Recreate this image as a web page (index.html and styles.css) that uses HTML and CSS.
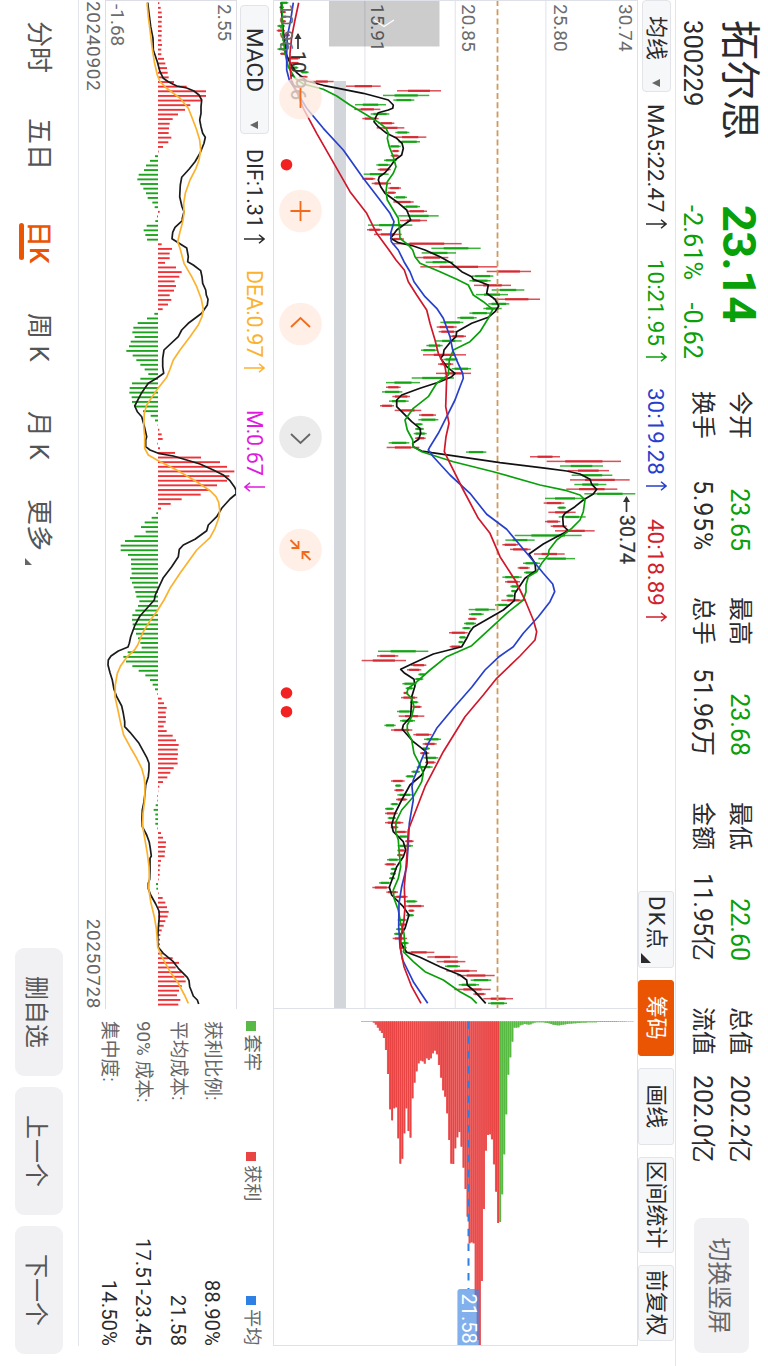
FILE: index.html
```html
<!DOCTYPE html>
<html lang="zh-CN">
<head>
  <meta charset="UTF-8"/>
  <meta name="viewport" content="width=device-width,initial-scale=1"/>
  <title>拓尔思 300229</title>
  <link rel="stylesheet" href="styles.css">
</head>
<body>
  <div class="phone">
  <div class="screen">
    <header class="head">
      <div class="name">
        <h1>拓尔思</h1>
        <span>300229</span>
      </div>
      <div class="price">
        <strong>23.14</strong>
        <div><span>-2.61%</span><span>-0.62</span></div>
      </div>
      <div class="stats">
        <span>今开</span><b class="down">23.65</b>
        <span>最高</span><b class="down">23.68</b>
        <span>最低</span><b class="down">22.60</b>
        <span>总值</span><b>202.2亿</b>
        <span>换手</span><b class="pct">5.95%</b>
        <span>总手</span><b>51.96万</b>
        <span>金额</span><b>11.95亿</b>
        <span>流值</span><b>202.0亿</b>
      </div>
      <button class="switch">切换竖屏</button>
    </header>

    <div class="mabar">
      <button class="pick">均线<i class="caret"></i></button>
      <div class="ma">
        <span>MA5:22.47<svg class="arr" viewBox="0 0 10 21"><path d="M5 21V1M.7 6L5 1l4.300 5"/></svg></span>
        <span class="ma10">10:21.95<svg class="arr" viewBox="0 0 10 21"><path d="M5 21V1M.7 6L5 1l4.300 5"/></svg></span>
        <span class="ma30">30:19.28<svg class="arr" viewBox="0 0 10 21"><path d="M5 21V1M.7 6L5 1l4.300 5"/></svg></span>
        <span class="ma40">40:18.89<svg class="arr" viewBox="0 0 10 21"><path d="M5 21V1M.7 6L5 1l4.300 5"/></svg></span>
      </div>
      <div class="tools">
        <button class="dk">DK点<i class="corner"></i></button>
        <button class="on">筹码</button>
        <button>画线</button>
        <button class="wide">区间统计</button>
        <button>前复权</button>
      </div>
    </div>

    <main class="main">
      <svg id="kline" width="1009" height="365"></svg>
      <svg id="chips" width="337" height="365"></svg>
    </main>

    <section class="lower">
      <div class="macd">
        <div class="macdbar">
          <button class="pick">MACD<i class="caret"></i></button>
          <span class="dif">DIF:1.31<svg class="arr" viewBox="0 0 10 21"><path d="M5 21V1M.7 6L5 1l4.300 5"/></svg></span>
          <span class="dea">DEA:0.97<svg class="arr" viewBox="0 0 10 21"><path d="M5 21V1M.7 6L5 1l4.300 5"/></svg></span>
          <span class="m">M:0.67<svg class="arr" viewBox="0 0 10 21"><path d="M5 0V20M.7 15L5 20l4.300-5"/></svg></span>
        </div>
        <svg id="macd" width="1009" height="132"></svg>
        <div class="dates"><span>20240902</span><span>20250728</span></div>
      </div>
      <div class="info">
        <div class="legend">
          <span><i class="g"></i>套牢</span>
          <span><i class="r"></i>获利</span>
          <span><i class="b"></i>平均</span>
        </div>
        <dl>
          <dt>获利比例:</dt><dd>88.90%</dd>
          <dt>平均成本:</dt><dd>21.58</dd>
          <dt>90% 成本:</dt><dd>17.51-23.45</dd>
          <dt>集中度:</dt><dd>14.50%</dd>
        </dl>
      </div>
    </section>

    <footer class="foot">
      <nav>
        <a>分时</a><a>五日</a><a class="on">日K</a><a>周 K</a><a>月 K</a><a>更多<i class="corner"></i></a>
      </nav>
      <div class="btns">
        <button>删自选</button>
        <button>上一个</button>
        <button>下一个</button>
      </div>
    </footer>
  </div>
  </div>
  <script src="chart.js"></script>
</body>
</html>
```
FILE: styles.css
```css
:root {
  --text: #2b2b2d;
  --muted: #666;
  --line: #e2e4e9;
  --soft: #f1f1f4;
  --green: #0aa00a;
  --red: #d0202c;
  --blue: #2740cc;
  --accent: #ea5504;
}
* { box-sizing: border-box; margin: 0; padding: 0 }
html { overflow: hidden }
body {
  background: #fff;
  font-family: Roboto, "Noto Sans CJK SC", sans-serif;
  color: var(--text);
}
button {
  font: inherit;
  color: inherit;
  border: none;
  white-space: nowrap;
}
svg { display: block }

.phone {
  width: 768px;
  height: 1366px;
  overflow: hidden;
}
/* landscape page turned clockwise */
.screen {
  width: 1366px;
  height: 768px;
  display: flex;
  flex-direction: column;
  transform-origin: 0 0;
  transform: translateX(768px) rotate(90deg);
}

/* header */
.head {
  height: 93px;
  display: flex;
  border-bottom: 1px solid var(--line);
}
.name { width: 205px; padding-left: 20px }
.name h1 {
  font-size: 40px;
  line-height: 58px;
  font-weight: 400;
}
.name span {
  display: block;
  font-size: 25.6px;
  line-height: 34px;
}
.price { width: 186px; color: var(--green) }
.price strong {
  display: block;
  font-size: 47px;
  line-height: 58px;
  letter-spacing: -0.8px;
}
.price div {
  display: flex;
  justify-content: space-between;
  width: 154px;
  font-size: 25.4px;
  line-height: 34px;
}
.stats {
  width: 827px;
  display: grid;
  grid-template-columns: 50px 156px 50px 155px 50px 155px 50px 110px;
  grid-template-rows: 37px 37px;
  padding-top: 10px;
  line-height: 37px;
}
.stats span { font-size: 24px }
.stats b {
  font-size: 25px;
  font-weight: 400;
  text-align: right;
  padding-right: 46px;
}
.stats b:nth-of-type(4n) {
  text-align: left;
  padding: 0 0 0 18px;
}
.stats .pct { letter-spacing: 0.8px }
.stats .down { color: var(--green) }
.switch {
  width: 135px;
  height: 55px;
  margin-top: 19px;
  border-radius: 8px;
  background: var(--soft);
  color: var(--muted);
  font-size: 24px;
}

/* moving averages */
.mabar {
  height: 37px;
  display: flex;
  align-items: center;
  font-size: 22.4px;
}
.pick {
  position: relative;
  height: 29px;
  background: #f6f7f9;
  border: 1px solid var(--line);
  border-radius: 4px;
  text-align: left;
  line-height: 27px;
}
.mabar .pick { width: 92px; padding-left: 15px; font-size: 22px }
.caret {
  position: absolute;
  right: 4px;
  top: 10px;
  border: 4.500px solid transparent;
  border-top: 8px solid var(--muted);
  border-bottom: none;
}
.ma {
  display: grid;
  grid-template-columns: 155px 129px 131px 372px;
  padding-left: 12px;
}
.ma span, .macdbar span { display: flex; align-items: center }
.ma10 { color: var(--green) }
.ma30 { color: var(--blue) }
.ma40 { color: var(--red) }
.arr {
  width: 10px;
  height: 21px;
  margin-left: 6px;
  fill: none;
  stroke: currentColor;
  stroke-width: 1.5;
}
.tools { display: flex; gap: 12px }
.tools button {
  position: relative;
  width: 76.500px;
  height: 36px;
  background: #f6f7f9;
  border: 1px solid var(--line);
  border-radius: 3px;
  font-size: 22px;
  line-height: 33px;
}
.tools .wide { width: 96px }
.tools .on {
  background: var(--accent);
  border-color: var(--accent);
  color: #fff;
}
.tools .dk {
  text-align: left;
  padding-left: 4px;
  letter-spacing: 1.2px;
}
.corner {
  position: absolute;
  right: 4px;
  bottom: 2px;
  border-left: 10px solid transparent;
  border-bottom: 10px solid var(--text);
}

.main {
  height: 365px;
  display: flex;
}
.lower {
  height: 195px;
  width: 1346px;
  display: flex;
  border-bottom: 1px solid var(--line);
}
.macd { width: 1009px }
.macdbar {
  height: 36px;
  display: flex;
  align-items: center;
  padding-left: 5px;
  font-size: 21.5px;
}
.macdbar .pick { width: 129px; padding-left: 22px; font-size: 22.600px }
.macdbar .arr { margin-left: 6px }
.dif { width: 121px; margin-left: 15px }
.dea { width: 140px; color: #fbb32f }
.m { color: #e01be0 }
.dates {
  display: flex;
  justify-content: space-between;
  padding: 0 0 0 1px;
  font-size: 19px;
  letter-spacing: 0.6px;
  line-height: 24px;
  color: var(--muted);
}

/* chips summary */
.info {
  width: 337px;
  padding-left: 12px;
  font-size: 18.800px;
  color: var(--muted);
}
.legend {
  display: grid;
  grid-template-columns: 130.500px 144px auto;
  height: 37px;
  align-items: center;
  font-size: 18.300px;
}
.legend i {
  display: inline-block;
  width: 9.500px;
  height: 9.500px;
  margin-right: 4px;
}
.legend .g { background: #58b947 }
.legend .r { background: #e94545 }
.legend .b { background: #2f80e4 }
.info dl {
  display: grid;
  grid-template-columns: auto 1fr;
  line-height: 34.300px;
  padding-top: 7px;
}
.info dd {
  text-align: right;
  color: var(--text);
  font-size: 20.400px;
}

/* footer */
.foot {
  flex: 1;
  display: flex;
  align-items: center;
  justify-content: space-between;
  padding: 0 12px 0 21px;
}
nav { display: flex; color: #555 }
nav a {
  position: relative;
  width: 97px;
  font-size: 26px;
  line-height: 42px;
}
nav a:nth-child(2) { width: 103px }
nav a:nth-child(3) { width: 92px }
nav a:nth-child(4) { width: 98px }
nav a:nth-child(5) { width: 88px }
nav a:nth-child(6) { width: 70px }
nav .corner {
  right: 4px;
  bottom: 7px;
  border-left-width: 7px;
  border-bottom: 7px solid #666;
}
nav .on { color: var(--accent); font-weight: 500 }
nav .on::after {
  content: "";
  position: absolute;
  left: 2px;
  bottom: 1px;
  width: 37px;
  height: 5px;
  border-radius: 3px;
  background: var(--accent);
}
.btns { display: flex; gap: 11px }
.btns button {
  width: 128px;
  height: 48px;
  border-radius: 9px;
  background: var(--soft);
  color: #555;
  font-size: 24px;
}

/* svg parts */
.axis { font-size: 19px; fill: #6c6c6e }
.mark { font-size: 19.500px; fill: #333; stroke: #333; stroke-width: 0.3 }
.tag { font-size: 20px; fill: #fff }
```
FILE: chart.js
```js
const RED = '#d2232c', GREEN = '#0aa00a';
const $ = id => document.getElementById(id);

const line = (pts, color, y) => {
  const p = pts.trim().split(/\s+/).map(s => s.split(','));
  return `<polyline points="${p.map(([v, t]) => (t / 3).toFixed(1) + ',' + y(+v).toFixed(1)).join(' ')}"
    fill="none" stroke="${color}" stroke-width="1.7" stroke-linejoin="round"/>`;
};
const rect = (x, y, w, h, c, extra = '') =>
  `<rect x="${x.toFixed(2)}" y="${y.toFixed(2)}" width="${w.toFixed(2)}" height="${h.toFixed(2)}" fill="${c}" ${extra}/>`;

// ---- k line: colour low high
const candles = `g30 55,g28 42,r30 48,g34 50,r33 48,g22 45,r20 45,r35 60,g36 50,g30 46,g22 50,r30 50,r52 90,r60 88,g60 85,g92 116,
r88 113,r120 191,r228 332,r381 513,g339 478,g370 433,g255 348,r253 331,g302 358,r277 326,r325 373,r320 403,g376 418,r372 469,
g385 450,g357 392,r365 388,r362 387,g342 380,g319 360,r323 362,g281 356,r277 316,r305 363,r355 393,r350 378,g372 411,r370 431,
g400 450,r410 471,g385 506,r390 471,g294 427,r291 336,r312 395,r365 402,r366 575,g484 632,g455 558,r435 535,g467 550,r451 682,
r650 783,g606 670,g598 662,r612 723,g665 763,g618 714,r670 810,g655 718,g640 695,g598 660,g562 620,g511 580,r500 560,r506 560,
r540 588,g497 575,g469 518,g453 502,r459 588,g520 563,r504 550,g545 603,r498 603,g425 552,g348 450,r348 392,g336 397,r367 420,
g357 416,r330 372,r374 454,r447 498,g445 505,g435 458,g435 462,g431 470,r435 467,g356 418,r350 448,g588 649,r780 870,r830 1053,
g870 999,r893 1017,g905 1027,r900 1079,g913 1009,r889 1042,g943 1096,g825 945,r821 883,g862 888,r835 917,g866 947,r825 871,
r842 890,r855 974,g734 935,g706 794,r697 745,r720 782,r792 884,g805 915,g759 810,r743 779,g762 795,g697 755,r705 750,g721 748,
g723 740,g709 732,r694 767,g675 718,g596 676,g597 641,r594 620,g582 618,g577 602,r537 593,g567 588,g565 580,r539 575,g324 475,
r321 385,r275 408,r423 469,r411 454,g445 468,g435 460,g397 440,g407 430,r400 415,r393 442,g420 445,r425 455,g381 425,r386 463,
g390 435,g343 377,r363 427,r430 485,g462 513,r458 500,g455 480,r450 478,g460 505,r465 497,g440 488,g424 450,g407 433,r363 404,
g375 394,r373 402,g382 427,r378 412,g362 385,g345 372,r345 383,g353 378,r345 400,r362 385,r375 412,g385 415,r405 431,g383 429,
r382 405,r381 400,g351 388,r344 378,g362 380,g360 378,g357 375,g327 362,r307 358,r349 384,r373 413,g405 442,r407 462,r415 433,
g408 432,g383 410,r385 408,g378 404,g372 398,r368 411,g392 416,r388 410,r400 493,r472 563,r500 586,g525 570,r529 621,r562 674,
g602 664,g566 627,r553 662,r610 647,r640 729,g654 711`.split(',').map(s => s.trim());

const ma5 = `34,8 36,60 42,110 48,160 60,190 80,218 110,243 160,256 220,268 280,280 325,292 355,300 370,315 368,325 355,330 325,338
318,350 312,365 325,380 350,400 380,415 396,430 400,445 395,465 375,480 360,500 345,518 328,530 325,540 332,560 345,580 380,605
410,630 422,660 405,672 380,690 362,715 385,728 430,738 465,750 510,770 545,790 575,815 605,830 610,838 655,855 650,880 675,898
686,918 675,935 655,952 605,970 560,995 558,1010 542,1025 522,1050 520,1065 512,1075 530,1100 555,1120 545,1130 510,1145
450,1165 395,1185 380,1200 380,1220 395,1235 425,1265 450,1285 452,1300 446,1318 428,1330 430,1340 455,1353 485,1358 690,1388
830,1405 890,1413 930,1422 960,1438 965,1453 980,1468 970,1482 940,1500 915,1520 885,1540 878,1550 880,1578 895,1592 860,1610
820,1632 777,1662 795,1690 797,1712 765,1735 748,1760 735,1780 733,1802 700,1830 610,1882 600,1895 590,1915 575,1940 490,1962
430,1990 392,2008 402,2018 432,2038 435,2058 425,2090 422,2150 400,2175 397,2188 430,2225 468,2255 472,2290 455,2325 420,2355
395,2400 375,2440 365,2475 370,2495 400,2525 407,2550 400,2570 380,2600 358,2662 365,2685 400,2720 417,2745 405,2785 392,2805
390,2825 410,2857 450,2872 510,2900 570,2925 590,2940 592,2955 615,2975 647,3010`;
const ma10 = `36,8 38,100 45,160 55,200 75,235 100,252 160,268 200,288 240,315 290,345 330,370 348,385 355,400 352,415 358,440
370,470 378,500 370,520 352,545 348,575 352,600 370,630 385,655 388,680 390,715 415,735 428,750 435,770 450,790 510,815 560,838
595,855 610,885 640,905 668,928 655,955 630,995 600,1025 550,1050 538,1080 535,1125 500,1150 475,1190 430,1225 405,1260
412,1290 428,1320 430,1340 455,1355 550,1385 670,1415 810,1455 890,1472 930,1485 945,1500 940,1535 930,1560 905,1585 860,1620
837,1650 835,1665 815,1690 800,1715 775,1730 768,1755 768,1775 760,1800 710,1840 605,1937 530,1970 480,2010 435,2050 415,2065
410,2080 425,2095 432,2120 425,2150 412,2175 412,2195 425,2220 432,2260 450,2295 460,2320 455,2345 430,2390 395,2430 378,2465
377,2495 385,2520 388,2560 392,2600 385,2635 370,2670 372,2695 385,2730 392,2770 402,2800 405,2840 400,2855 430,2885 465,2915
520,2940 570,2975 605,2995 620,3010`;
const ma30 = `70,8 62,60 52,110 50,160 50,210 58,240 80,275 110,325 160,385 220,450 280,535 330,600 360,640 372,665 362,700 364,725
385,750 402,785 420,815 432,845 465,890 500,925 520,955 540,1010 548,1050 562,1085 578,1120 580,1135 570,1160 555,1200 530,1250
505,1300 480,1340 475,1350 490,1370 540,1425 600,1480 650,1543 710,1588 775,1665 820,1720 848,1752 854,1775 840,1805 805,1850
760,1900 730,1940 685,1972 645,2010 605,2062 550,2125 500,2185 475,2230 450,2290 430,2340 426,2360 430,2400 418,2470 415,2530
410,2600 395,2660 387,2710 386,2780 390,2840 398,2880 430,2945 473,3010`;
const ma40 = `86,8 75,60 65,110 60,160 60,200 64,240 80,275 100,325 140,400 180,470 240,575 290,640 320,700 357,750 378,780 403,810
415,845 440,885 470,930 480,970 495,1020 505,1060 525,1100 530,1130 527,1220 537,1270 528,1310 523,1355 540,1390 580,1470
625,1555 660,1600 690,1670 735,1740 765,1800 790,1860 800,1895 795,1920 750,1968 680,2035 640,2085 585,2150 520,2255 465,2360
415,2490 412,2550 408,2600 403,2660 405,2720 402,2760 393,2810 392,2850 402,2900 425,2960 453,3010`;

const ky = v => 368 - v / 3;
let k = '';
[91.500, 182, 272.500].forEach(y => k += rect(0, y, 1009, 1.3, '#e6e9ef'));
k += rect(81, 292, 928, 12, '#d3d6db');
candles.forEach((c, i) => {
  const col = c[0] === 'r' ? RED : GREEN;
  const [lo, hi] = c.slice(1).split(' ').map(Number);
  const x = 2.8 + 4.632 * i, d = (hi - lo) * (hi - lo > 70 ? 0.25 : 0.15);
  k += rect(x - 0.75, ky(hi), 1.5, (hi - lo) / 3, col, 'opacity=".8"');
  k += rect(x - 1.15, ky(hi - d), 2.3, (hi - lo - 2 * d) / 3, col, 'opacity=".85"');
});
k += '<path d="M0 140.500H1009" stroke="#cf9a5e" stroke-width="1.800" stroke-dasharray="6 3.3"/>';
k += line(ma5, '#111', ky) + line(ma10, GREEN, ky) + line(ma30, '#2740cc', ky) + line(ma40, '#d0182c', ky);

[[30.74, 19], [25.80, 84], [20.85, 176], [15.91, 267.500], [10.96, 358.500]].forEach(([t, y]) =>
  k += `<text class="axis" x="4" y="${y}">${t.toFixed(2)}</text>`);
k += `<path d="M34 340H49" stroke="#333" stroke-width="1.700"/><path d="M33 340l6-3.500v7z" fill="#333"/>
  <text class="mark" x="51" y="347">10.96</text>
  <path d="M498 11.500H512" stroke="#333" stroke-width="1.700"/><path d="M496 11.500l6-3.500v7z" fill="#333"/>
  <text class="mark" x="515" y="18">30.74</text>`;

// drawing controls over the chart
const icons = ['M-10 0H10', 'M-10 0H10M0-10V10', 'M3-9.500L-6 0L3 9.500', 'M-3-9.500L6 0L-3 9.500',
  'M-2 9V2H-9M-2 2L-10 10M2-9V-2H9M2-2L10-10'];
icons.forEach((d, i) => {
  const grey = i === 3;
  k += `<g transform="translate(${98 + 113 * i} 337.500)">
    <circle r="21.300" fill="${grey ? '#e4e4e4' : '#ffe9df'}" fill-opacity=".75"/>
    <path d="${d}" fill="none" stroke="${grey ? '#666' : '#f26a1b'}" stroke-width="1.8"/></g>`;
});
[164.700, 693, 711.700].forEach(x => k += `<circle cx="${x}" cy="351.500" r="5.800" fill="#f22222"/>`);
k += rect(0, 198.500, 46.500, 110.500, '#000', 'opacity=".2"');
k += '<path d="M20 244L26.500 254L20 264" fill="none" stroke="#fff" stroke-width="1.3"/>';
k += '<path d="M0 .5H1009M.5 0V365M0 364.500H1009M1008.500 0V365" fill="none" stroke="#dfe1e8"/>';
$('kline').innerHTML = k;

// ---- chip distribution
const chips = [68, 74, 83, 92, 99, 114, 150, 222, 328, 361, 325, 322, 415, 491, 476, 400, 325, 393, 413, 295, 248, 214, 190, 182,
  184, 191, 175, 180, 175, 160, 152, 163, 195, 233, 271, 290, 340, 420, 491, 492, 445, 412, 396, 440, 503, 567, 650, 730, 727, 730,
  885, 1020, 1038, 843, 627, 452, 405, 403, 418, 493, 575, 669, 666, 583, 463, 343, 224, 172, 125, 83, 83, 82, 76, 74, 72, 73, 74,
  73, 70, 68, 67, 67, 67, 67, 68, 69, 70, 72, 74, 75, 76, 76, 75, 74, 73, 72, 71, 71, 70, 70, 69, 69, 68, 68, 68, 67, 67, 67, 67,
  67, 66, 66, 66, 66, 66, 66, 66, 66, 66, 66, 65.500, 65.500, 65.500, 65.500, 65, 65, 65, 65];
const step = 2.038;
let c = '';
chips.forEach((v, i) => {
  const y = ky(308) - step * (i + 1), w = (v - 64) / 3, col = i < 62 ? '#e94444' : '#58b942';
  c += rect(12.3, y, w, step, col, 'opacity=".85"') + rect(12.3, y, w, 1.3, col);
});
c += '<path d="M12.500 265V277" stroke="#e94444" stroke-width=".5"/>';
c += '<path d="M12.500 169.500H280" stroke="#2f80e4" stroke-width="2" stroke-dasharray="7.500 7.300"/>';
c += '<path d="M280 161a3 3 0 0 1 3-3H337V180.600H283a3 3 0 0 1-3-3z" fill="#3f86e4" fill-opacity=".65"/>';
c += '<text class="tag" x="284.500" y="176.500">21.58</text>';
c += '<path d="M0 .5H337M0 364.500H337M336.500 0V365" fill="none" stroke="#dfe1e8"/>';
$('chips').innerHTML = c;

// ---- macd
const bars = [478, 482, 485, 486, 485, 485, 485, 485, 484, 486, 484, 484, 492, 496, 501, 503, 506, 522, 560, 618, 618, 603, 571, 555,
  534, 518, 509, 507, 506, 514, 505, 489, 476, 465, 450, 438, 432, 416, 412, 421, 430, 438, 443, 457, 464, 479, 471, 466, 440, 431,
  436, 441, 485, 516, 509, 509, 495, 528, 545, 538, 524, 528, 522, 509, 514, 504, 488, 463, 441, 413, 400, 397, 404, 392, 387, 379,
  398, 409, 421, 434, 445, 421, 396, 389, 388, 395, 396, 404, 429, 452, 465, 473, 478, 485, 488, 472, 480, 525, 603, 660, 681, 703,
  688, 681, 651, 628, 602, 545, 512, 483, 469, 455, 434, 423, 437, 403, 375, 362, 362, 384, 393, 393, 394, 395, 390, 396, 401, 406,
  409, 418, 414, 406, 397, 396, 398, 402, 408, 414, 421, 425, 383, 370, 378, 397, 416, 436, 450, 458, 465, 472, 485, 492, 500, 497,
  498, 497, 491, 500, 518, 528, 536, 533, 534, 532, 533, 521, 511, 502, 489, 478, 475, 472, 472, 467, 461, 466, 466, 466, 472, 483,
  489, 498, 497, 495, 494, 483, 481, 479, 479, 476, 468, 469, 476, 488, 496, 501, 506, 503, 496, 491, 485, 481, 480, 480, 480, 488,
  518, 537, 527, 545, 553, 557, 545, 537, 531, 541, 535];
const dif = `443,8 447,40 452,80 459,115 460,150 472,185 480,215 490,235 505,245 530,258 560,264 582,273 597,285 605,300 603,320
603,340 599,360 603,380 608,400 616,412 612,430 600,460 585,485 567,508 545,532 541,555 539,590 546,620 552,635 547,655 547,662
525,682 518,697 516,716 535,728 560,744 565,770 563,785 580,795 602,812 606,830 608,850 617,870 619,885 624,898 622,915 605,940
565,970 545,990 535,1010 492,1050 488,1075 488,1100 491,1120 470,1135 445,1150 425,1178 404,1218 412,1235 425,1250 432,1275
440,1310 437,1320 437,1340 450,1350 475,1360 520,1368 560,1380 600,1392 640,1410 670,1425 690,1442 703,1460 708,1470 708,1482
690,1497 665,1525 650,1550 625,1575 620,1592 585,1618 550,1635 538,1648 535,1670 515,1700 490,1733 475,1765 466,1785 463,1800
445,1820 420,1848 405,1875 392,1910 388,1930 384,1941 355,1953 333,1968 325,1980 324,1995 330,2018 337,2040 342,2068 350,2090
365,2118 370,2140 374,2165 374,2180 390,2197 417,2230 440,2272 447,2290 447,2310 445,2330 437,2355 435,2380 432,2405 427,2430
426,2455 427,2480 440,2505 448,2527 451,2545 454,2568 450,2575 450,2610 449,2638 445,2650 445,2666 452,2685 467,2712 477,2733
478,2750 476,2770 474,2800 473,2820 475,2842 490,2860 520,2885 535,2905 562,2932 567,2942 569,2960 575,2975 580,2988 592,3000
596,3012`;
const dea = `441,8 445,50 450,90 456,140 463,185 472,225 480,245 500,265 540,295 565,325 575,350 590,390 599,420 602,450 597,480
588,505 570,540 556,580 551,610 552,640 548,665 540,695 533,725 540,745 552,790 575,830 590,860 604,897 610,928 606,950 595,975
570,1010 540,1050 520,1080 509,1110 500,1132 470,1170 440,1215 433,1240 431,1280 434,1310 434,1345 445,1365 475,1382 530,1410
595,1448 630,1472 648,1490 656,1507 659,1530 657,1552 645,1585 630,1613 590,1650 540,1720 510,1765 492,1800 470,1835 450,1862
430,1895 413,1935 405,1948 380,1972 362,1997 352,2020 346,2055 345,2090 355,2135 362,2170 371,2205 390,2240 410,2275 425,2305
432,2330 435,2355 434,2400 429,2440 428,2480 435,2520 442,2560 447,2600 448,2630 446,2665 452,2705 463,2750 469,2785 472,2820
473,2840 485,2870 510,2915 535,2950 555,2988 565,3010`;
const my = v => 237 - v / 3;
let m = '';
bars.forEach((v, i) => {
  const up = v > 474;
  m += rect(3.2 + 4.636 * i - 0.95, up ? my(v) : my(474), 1.9, Math.abs(v - 474) / 3, up ? '#ee3338' : '#1ea31e');
});
m += line(dif, '#1b1b1b', my) + line(dea, '#fbb32f', my);
m += '<text class="axis" x="4" y="19">2.55</text><text class="axis" x="4" y="126.500">-1.68</text>';
m += '<path d="M0 .5H1009M.5 0V132M0 131.500H1009" fill="none" stroke="#dcdde5"/>';
$('macd').innerHTML = m;
```
